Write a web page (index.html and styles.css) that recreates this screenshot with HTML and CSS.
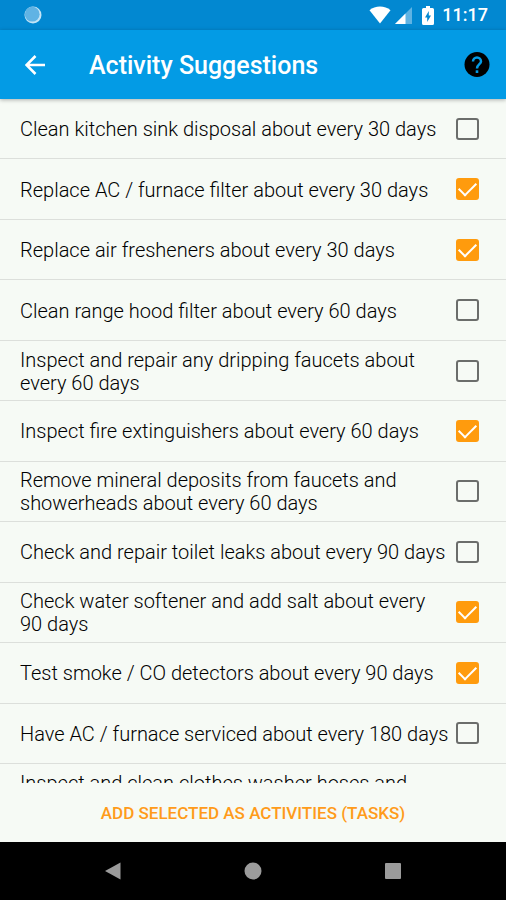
FILE: index.html
```html
<!DOCTYPE html>
<html lang="en">
<head>
<meta charset="utf-8">
<meta name="viewport" content="width=device-width, initial-scale=1">
<title>Activity Suggestions</title>
<link rel="stylesheet" href="styles.css">
</head>
<body>
<div class="status">
  <svg class="status-sync" width="20" height="20" viewBox="0 0 20 20" aria-hidden="true"><circle cx="10" cy="10" r="8.5" fill="#c4e4f6"/><circle cx="9.2" cy="9.2" r="7.4" fill="#60b3e4"/></svg>
  <svg width="22" height="18" viewBox="0 0 22 18" aria-hidden="true"><path d="M0.5 4.2C6 -.8 16 -.8 21.500 4.200L11 17.500Z" fill="#fff"/></svg>
  <svg class="status-signal" width="17" height="17" viewBox="0 0 17 17" aria-hidden="true"><path d="M17 0V17H0Z" fill="#5fb3e3"/><path d="M10.500 6.500V17H0Z" fill="#fff"/></svg>
  <svg class="status-battery" width="12" height="19" viewBox="0 0 12 19" aria-hidden="true"><path d="M4 0H8V2H10.500Q12 2 12 3.500V17.500Q12 19 10.500 19H1.500Q0 19 0 17.500V3.500Q0 2 1.500 2H4Z" fill="#fff"/><path d="M6.800 5V9.500H9L5.200 16V11.500H3Z" fill="#0288d1"/></svg>
  <span class="clock">11:17</span>
</div>
<header class="bar">
  <button class="icon-button" type="button" aria-label="Back">
    <svg width="20" height="20" viewBox="0 0 20 20"><path d="M20 10H2M10.500 1L1.500 10L10.500 19" fill="none" stroke="#fff" stroke-width="2.600"/></svg>
  </button>
  <h1>Activity Suggestions</h1>
  <button class="icon-button" type="button" aria-label="Help">
    <svg width="26" height="26" viewBox="0 0 26 26"><circle cx="13" cy="12.500" r="12.500" fill="#000"/><path d="M9 9.500A4 4 0 1 1 17 9.500C17 12.200 13 12.300 13 16.500" fill="none" stroke="#039be5" stroke-width="2.500"/><path d="M11.700 18.300H14.300V21H11.700Z" fill="#039be5"/></svg>
  </button>
</header>
<main class="list">
  <label class="row"><span>Clean kitchen sink disposal about every 30 days</span><input type="checkbox"></label>
  <label class="row"><span>Replace AC / furnace filter about every 30 days</span><input type="checkbox" checked></label>
  <label class="row"><span>Replace air fresheners about every 30 days</span><input type="checkbox" checked></label>
  <label class="row"><span>Clean range hood filter about every 60 days</span><input type="checkbox"></label>
  <label class="row"><span>Inspect and repair any dripping faucets about every 60 days</span><input type="checkbox"></label>
  <label class="row"><span>Inspect fire extinguishers about every 60 days</span><input type="checkbox" checked></label>
  <label class="row"><span>Remove mineral deposits from faucets and showerheads about every 60 days</span><input type="checkbox"></label>
  <label class="row"><span>Check and repair toilet leaks about every 90 days</span><input type="checkbox"></label>
  <label class="row"><span>Check water softener and add salt about every 90 days</span><input type="checkbox" checked></label>
  <label class="row"><span>Test smoke / CO detectors about every 90 days</span><input type="checkbox" checked></label>
  <label class="row"><span>Have AC / furnace serviced about every 180 days</span><input type="checkbox"></label>
  <div class="row row-partial"><span>Inspect and clean clothes washer hoses and</span></div>
</main>
<footer class="actions"><button type="button">ADD SELECTED AS ACTIVITIES (TASKS)</button></footer>
<nav class="system-nav" aria-label="System">
  <button type="button" aria-label="Back"><svg width="18" height="18" viewBox="0 0 18 18"><path d="M16.500 0.500V17.500L1 9Z" fill="#9b9b9b"/></svg></button>
  <button type="button" aria-label="Home"><svg width="18" height="18" viewBox="0 0 18 18"><circle cx="9" cy="9" r="8.500" fill="#9b9b9b"/></svg></button>
  <button type="button" aria-label="Recent apps"><svg width="18" height="18" viewBox="0 0 18 18"><rect x="1" y="1" width="16" height="16" rx="1" fill="#9b9b9b"/></svg></button>
</nav>
</body>
</html>
```
FILE: styles.css
```css
* {
  box-sizing: border-box;
}

body {
  margin: 0;
  height: 100vh;
  display: flex;
  flex-direction: column;
  background: #f6faf5;
  color: #000;
  font-family: Roboto, "Liberation Sans", sans-serif;
}

button {
  padding: 0;
  border: 0;
  background: none;
  font: inherit;
  cursor: pointer;
}

svg {
  display: block;
}

.status {
  flex: none;
  height: 30px;
  padding: 0 18px 0 23px;
  display: flex;
  align-items: center;
  background: #0288d1;
  color: #fff;
}

.status-sync {
  margin-right: auto;
}

.status-signal {
  margin-left: 4px;
}

.status-battery {
  margin: 0 8px 0 10px;
}

.clock {
  font-size: 18px;
  font-weight: 500;
  line-height: 32px;
}

.bar {
  flex: none;
  height: 69px;
  padding: 0 16px 0 25px;
  display: flex;
  align-items: center;
  background: #039be5;
  color: #fff;
  box-shadow: 0 1px 4px rgba(0, 0, 0, 0.3);
  z-index: 1;
}

.bar h1 {
  flex: 1;
  margin: 0 0 0 44px;
  padding-top: 2px;
  font-size: 25px;
  font-weight: 500;
  line-height: 32px;
}

.list {
  flex: 1;
  min-height: 0;
  overflow: hidden;
  display: grid;
  grid-template-rows: repeat(11, 1fr) 19px;
}

.row {
  min-height: 0;
  padding: 0 27px 0 20px;
  display: flex;
  align-items: center;
  gap: 4px;
  border-bottom: 1px solid #dcdfdb;
  font-size: 20px;
  font-weight: 350;
  line-height: 23px;
}

.row span {
  flex: 1;
  padding-top: 2px;
}

.row-partial {
  padding-top: 6px;
  align-items: flex-start;
  overflow: hidden;
  border-bottom: 0;
}

.row input {
  appearance: none;
  flex: none;
  width: 23px;
  height: 22px;
  margin: 0;
  border: 2px solid #6b6d6b;
  border-radius: 3px;
  display: grid;
  place-items: center;
}

.row input:checked {
  border-color: #ff9b0d;
  background: #ff9b0d;
}

.row input:checked::before {
  content: "";
  width: 15px;
  height: 8px;
  margin-bottom: 4px;
  border: solid #fff;
  border-width: 0 0 2px 2px;
  rotate: -45deg;
}

.actions {
  flex: none;
  height: 59px;
  display: flex;
  justify-content: center;
}

.actions button {
  color: #ff9b1a;
  font-size: 17px;
  font-weight: 500;
}

.system-nav {
  flex: none;
  height: 58px;
  display: flex;
  align-items: center;
  justify-content: center;
  gap: 122px;
  background: #000;
}
```
